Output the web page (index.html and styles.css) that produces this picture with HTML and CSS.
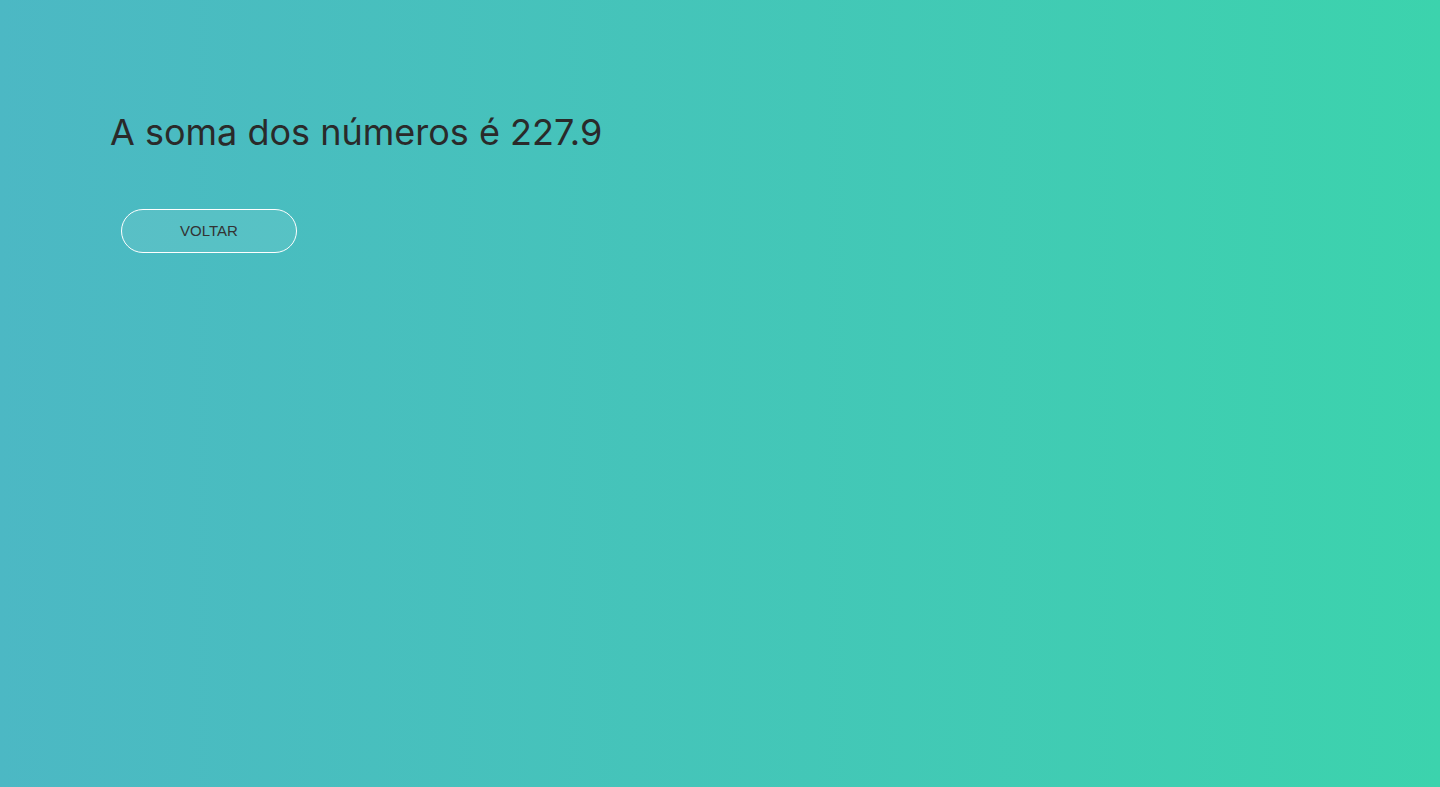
FILE: index.html
```html
<!DOCTYPE html>
<html lang="pt-BR">
<head>
<meta charset="utf-8">
<title>Resultado</title>
<link rel="stylesheet" href="styles.css">
</head>
<body>
<main class="page">
  <h1 class="result">A soma dos números é 227.9</h1>
  <div class="actions">
    <a class="btn" href="#">VOLTAR</a>
  </div>
</main>
</body>
</html>
```

FILE: styles.css
```css
html, body {
  margin: 0;
  padding: 0;
  height: 100%;
}
body {
  background: linear-gradient(to right, #4cb8c4, #3cd3ad);
  font-family: "Liberation Sans", Arial, sans-serif;
  color: #2a2a2a;
}
.page {
  padding: 106px 110px 0;
}
.result {
  margin: 0;
  font-family: Inter, "Noto Sans", sans-serif;
  font-weight: 400;
  font-size: 36px;
  line-height: 52px;
  color: #2a2a2a;
}
.actions {
  display: flex;
  padding: 51px 0 0 11px;
}
.btn {
  display: flex;
  align-items: center;
  justify-content: center;
  box-sizing: border-box;
  width: 176px;
  height: 44px;
  padding-bottom: 2px;
  border: 1px solid #ffffff;
  border-radius: 22px;
  background: rgba(255, 255, 255, 0.08);
  color: #333;
  font-size: 15px;
  text-decoration: none;
}
```
